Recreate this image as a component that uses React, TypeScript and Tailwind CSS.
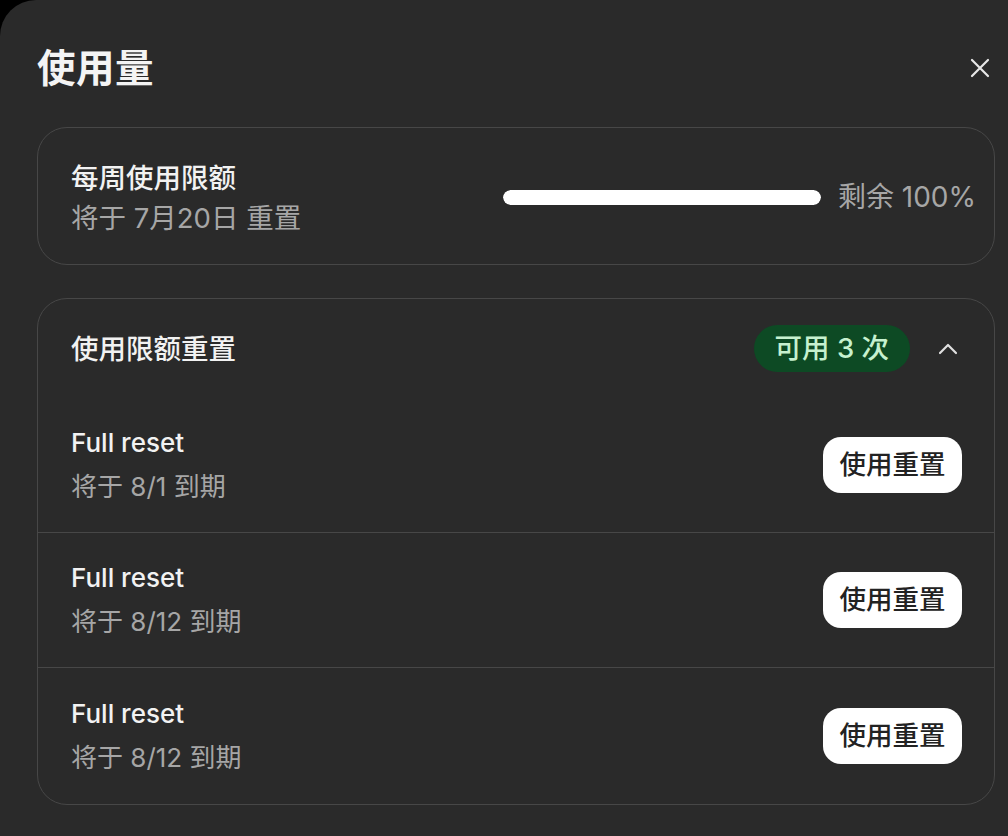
import React from "react";

const font = {
  fontFamily: '"Inter", "Noto Sans CJK SC", "Noto Sans", sans-serif',
};

function CloseIcon() {
  return (
    <svg width="20" height="20" viewBox="0 0 20 20" fill="none">
      <path d="M2 2 L18 18 M18 2 L2 18" stroke="#e8e8e8" strokeWidth="2.2" strokeLinecap="round" />
    </svg>
  );
}

function ChevronUp() {
  return (
    <svg width="20" height="12" viewBox="0 0 20 12" fill="none">
      <path d="M2 10 L10 2 L18 10" stroke="#e0e0e0" strokeWidth="2.2" strokeLinecap="round" strokeLinejoin="round" />
    </svg>
  );
}

const resets = [
  { name: "Full reset", expiry: "将于 8/1 到期" },
  { name: "Full reset", expiry: "将于 8/12 到期" },
  { name: "Full reset", expiry: "将于 8/12 到期" },
];

export default function App() {
  return (
    <div className="w-[1008px] h-[836px] bg-black overflow-hidden" style={font}>
      <div className="w-full h-full bg-[#2a2a2a] rounded-tl-[36px] px-[37px] pr-[13px]">
        {/* header */}
        <div className="flex items-center justify-between pt-[45px] mb-[36px] h-[91px]">
          <h1 className="text-[38.5px] leading-[46px] font-bold text-[#f4f4f4] tracking-[0.5px]">使用量</h1>
          <button className="w-[20px] h-[20px] mr-[5px] flex items-center justify-center">
            <CloseIcon />
          </button>
        </div>

        {/* weekly limit */}
        <div className="h-[138px] rounded-[30px] border-[1.5px] border-[#474747] flex items-center justify-between pl-[33px] pr-[18px]">
          <div className="flex flex-col pt-[3px]">
            <span className="text-[27.5px] leading-[40px] font-medium text-[#f2f2f2]">每周使用限额</span>
            <span className="text-[27.5px] leading-[40px] text-[#a6a6a6]">将于 7月20日 重置</span>
          </div>
          <div className="flex items-center gap-[17px] pt-[2px]">
            <div className="w-[318px] h-[15px] rounded-full bg-[#3d3d3d] overflow-hidden">
              <div className="h-full rounded-full bg-white" style={{ width: "100%" }} />
            </div>
            <span className="text-[28px] leading-[40px] text-[#a6a6a6]">剩余 100%</span>
          </div>
        </div>

        {/* reset credits */}
        <div className="mt-[33px] h-[507px] rounded-[30px] border-[1.5px] border-[#474747] flex flex-col overflow-hidden">
          <div className="h-[99px] flex items-center justify-between pl-[33px] pr-[36px] shrink-0">
            <span className="text-[27.5px] leading-[40px] font-medium text-[#f2f2f2]">使用限额重置</span>
            <div className="flex items-center gap-[28px]">
              <span className="h-[47px] px-[21px] rounded-full bg-[#0d4a24] text-[#c6f1cf] text-[27.5px] leading-[47px] font-medium">
                可用 3 次
              </span>
              <ChevronUp />
            </div>
          </div>
          {resets.map((r, i) => (
            <div
              key={i}
              className={`h-[135px] shrink-0 flex items-center justify-between pl-[33px] pr-[32px] ${
                i < resets.length - 1 ? "border-b-[1.5px] border-[#474747]" : ""
              }`}
            >
              <div className="flex flex-col">
                <span className="text-[26px] leading-[44px] font-medium text-[#f2f2f2]">{r.name}</span>
                <span className="text-[26px] leading-[44px] text-[#a6a6a6]">{r.expiry}</span>
              </div>
              <button className="h-[56px] w-[139px] rounded-[18px] bg-white text-[#222] text-[26.5px] font-medium flex items-center justify-center">
                使用重置
              </button>
            </div>
          ))}
        </div>
      </div>
    </div>
  );
}
